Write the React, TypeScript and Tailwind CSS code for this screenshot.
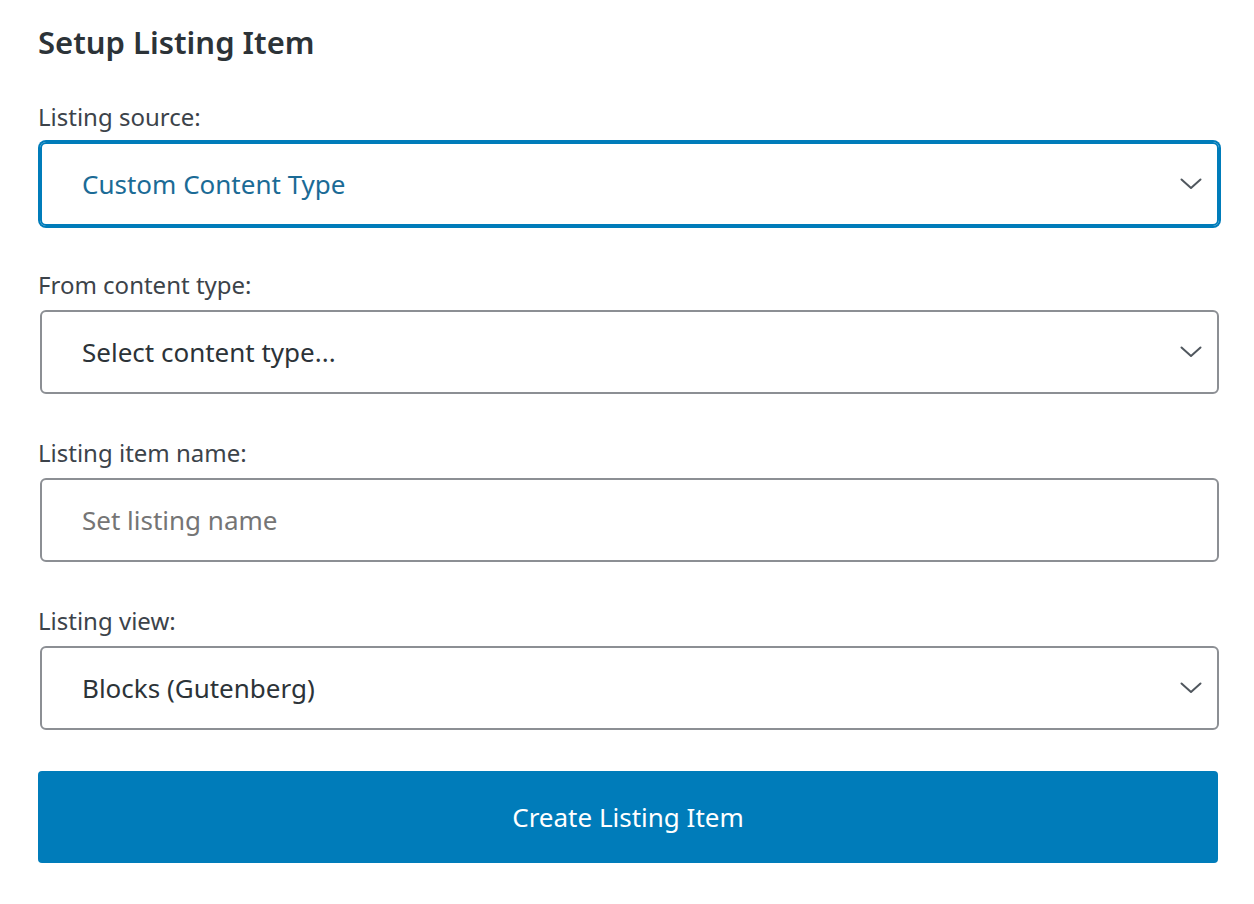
import React from 'react';

const font = { fontFamily: '"Noto Sans", "Open Sans", sans-serif' };

function Chevron() {
  return (
    <svg width="22" height="12" viewBox="0 0 22 12" className="absolute right-[15px] top-1/2 -translate-y-1/2" fill="none">
      <polyline points="1.5,1.5 11,10 20.5,1.5" stroke="#50575e" strokeWidth="2" strokeLinecap="round" strokeLinejoin="round" />
    </svg>
  );
}

function Label({ children }: { children: React.ReactNode }) {
  return <div className="text-[24px] leading-[34px] text-[#3c434a] mb-2">{children}</div>;
}

function SelectBox({ value, focused }: { value: string; focused?: boolean }) {
  return (
    <div
      className={`relative h-[84px] w-[1179px] rounded-[6px] border-2 flex items-center pl-[40px] text-[26px] ${
        focused
          ? 'border-[#007cba] shadow-[0_0_0_2px_#007cba] text-[#1b6b96] rounded-[4px]'
          : 'border-[#8c8f94] text-[#2c3338]'
      }`}
    >
      <span>{value}</span>
      <Chevron />
    </div>
  );
}

export default function App() {
  return (
    <div className="w-[1254px] h-[904px] bg-white pl-[40px] pt-[23px]" style={font}>
      <h1 className="text-[31px] leading-[38px] font-semibold text-[#2c3338] -ml-[2px]">Setup Listing Item</h1>

      <div className="mt-[39px] -ml-[2px]">
        <Label>Listing source:</Label>
      </div>
      <SelectBox value="Custom Content Type" focused />

      <div className="mt-[42px] -ml-[2px]">
        <Label>From content type:</Label>
      </div>
      <SelectBox value="Select content type..." />

      <div className="mt-[42px] -ml-[2px]">
        <Label>Listing item name:</Label>
      </div>
      <div className="h-[84px] w-[1179px] rounded-[6px] border-2 border-[#8c8f94] flex items-center pl-[40px] text-[26px] text-[#757575]">
        Set listing name
      </div>

      <div className="mt-[42px] -ml-[2px]">
        <Label>Listing view:</Label>
      </div>
      <SelectBox value="Blocks (Gutenberg)" />

      <button className="mt-[41px] -ml-[2px] h-[92px] w-[1180px] rounded-[4px] bg-[#007cba] text-white text-[26px] flex items-center justify-center">
        Create Listing Item
      </button>
    </div>
  );
}
